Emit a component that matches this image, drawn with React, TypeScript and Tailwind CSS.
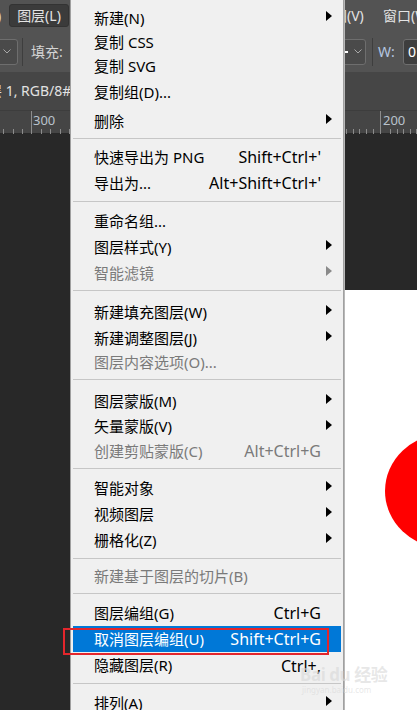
import React from "react";

type Row =
  | { sep: true; pt: number; pb: number }
  | {
      sep?: false;
      label: string;
      shortcut?: string;
      arrow?: boolean;
      disabled?: boolean;
      active?: boolean;
      h: number;
    };

const rows: Row[] = [
  { label: "新建(N)", arrow: true, h: 26 },
  { label: "复制 CSS", h: 23 },
  { label: "复制 SVG", h: 25 },
  { label: "复制组(D)...", h: 27 },
  { label: "删除", arrow: true, h: 30 },
  { sep: true, pt: 2, pb: 5 },
  { label: "快速导出为 PNG", shortcut: "Shift+Ctrl+'", h: 26 },
  { label: "导出为...", shortcut: "Alt+Shift+Ctrl+'", h: 26 },
  { sep: true, pt: 5, pb: 6 },
  { label: "重命名组...", h: 26 },
  { label: "图层样式(Y)", arrow: true, h: 26 },
  { label: "智能滤镜", arrow: true, disabled: true, h: 26 },
  { sep: true, pt: 4, pb: 8 },
  { label: "新建填充图层(W)", arrow: true, h: 26 },
  { label: "新建调整图层(J)", arrow: true, h: 26 },
  { label: "图层内容选项(O)...", disabled: true, h: 23 },
  { sep: true, pt: 5, pb: 8 },
  { label: "图层蒙版(M)", arrow: true, h: 26 },
  { label: "矢量蒙版(V)", arrow: true, h: 25 },
  { label: "创建剪贴蒙版(C)", shortcut: "Alt+Ctrl+G", disabled: true, h: 24 },
  { sep: true, pt: 5, pb: 6 },
  { label: "智能对象", arrow: true, h: 26 },
  { label: "视频图层", arrow: true, h: 26 },
  { label: "栅格化(Z)", arrow: true, h: 26 },
  { sep: true, pt: 5, pb: 5 },
  { label: "新建基于图层的切片(B)", disabled: true, h: 24 },
  { sep: true, pt: 5, pb: 6 },
  { label: "图层编组(G)", shortcut: "Ctrl+G", h: 26 },
  { label: "取消图层编组(U)", shortcut: "Shift+Ctrl+G", active: true, h: 26 },
  { label: "隐藏图层(R)", shortcut: "Ctrl+,", h: 27 },
  { sep: true, pt: 4, pb: 6 },
  { label: "排列(A)", arrow: true, h: 26 },
];

function Arrow({ color }: { color: string }) {
  return (
    <svg width="6" height="10" viewBox="0 0 6 10" className="mr-[9px] -translate-y-[2px] shrink-0">
      <path d="M0 0 L6 5 L0 10 Z" fill={color} />
    </svg>
  );
}

function Chevron() {
  return (
    <svg width="8" height="5" viewBox="0 0 8 5" className="shrink-0">
      <path d="M0.5 0.5 L4 4 L7.5 0.5" fill="none" stroke="#a8a8a8" strokeWidth="1" />
    </svg>
  );
}

function Menu() {
  return (
    <div className="absolute left-[70px] top-0 w-[274px] pt-[5px] bg-[#f0f0f0] border-x border-[#a0a0a0] shadow-[1px_0_0_#b8b8b8] text-[15px]">
      {rows.map((r, i) => {
        if (r.sep) {
          return (
            <div key={i} style={{ paddingTop: r.pt, paddingBottom: r.pb }}>
              <div className="mx-[2px] h-px bg-[#c6c6c6]" />
            </div>
          );
        }
        const color = r.active ? "text-white" : r.disabled ? "text-[#7a7a7a]" : "text-black";
        return (
          <div
            key={i}
            style={{ height: r.h }}
            className={`mx-[2px] flex items-center pl-[21px] ${r.active ? "bg-[#0078d7]" : ""} ${color}`}
          >
            <span className="flex-1 whitespace-nowrap">{r.label}</span>
            {r.shortcut && <span className="mr-[20px] whitespace-nowrap text-[16px]">{r.shortcut}</span>}
            {r.arrow && <Arrow color={r.disabled ? "#8a8a8a" : "#000"} />}
          </div>
        );
      })}
    </div>
  );
}

function Ruler() {
  const left = [3, 13, 22, 41, 50, 60, 69];
  const right = [346, 353, 359, 366, 373, 390, 397, 403, 410, 416];
  return (
    <div className="relative h-[23px] bg-[#454545] border-t border-[#3d3d3d] text-[13px] text-[#b9c2cc]">
      <svg className="absolute inset-0" width="417" height="23">
        <rect x="31" y="0" width="1" height="23" fill="#8c8c8c" />
        <rect x="380" y="0" width="1" height="23" fill="#8c8c8c" />
        {[...left, ...right].map((x) => (
          <rect key={x} x={x} y="18" width="1" height="5" fill="#8c8c8c" />
        ))}
      </svg>
      <span className="absolute left-[33px] top-[3px]">300</span>
      <span className="absolute left-[383px] top-[3px]">200</span>
    </div>
  );
}

export default function App() {
  return (
    <div className="relative w-[417px] h-[710px] overflow-hidden bg-[#282828] flex flex-col font-['Noto_Sans','Noto_Sans_CJK_SC',sans-serif] text-[14.5px] leading-none">
      {/* menu bar */}
      <div className="h-[31px] shrink-0 bg-[#535353] flex items-center text-[14px] text-[#e4e4e4]">
        <div className="w-[9px] shrink-0 overflow-hidden flex">
          <span className="-ml-[3px]">)</span>
        </div>
        <div className="w-[60px] h-[23px] shrink-0 rounded-[3px] bg-[#3b3b3b] border border-[#333] flex items-center justify-center">
          图层(L)
        </div>
        <div className="w-[250px] shrink-0" />
        <span className="w-[64px] shrink-0 whitespace-nowrap">视图(V)</span>
        <span className="whitespace-nowrap">窗口(W)</span>
      </div>

      {/* options bar */}
      <div className="h-[41px] shrink-0 bg-[#535353] flex items-center overflow-hidden text-[14px] text-[#d4d4d4]">
        <div className="-ml-[22px] w-[40px] h-[26px] shrink-0 rounded-[3px] border border-[#6e6e6e] bg-[#4a4a4a] flex items-center justify-end pr-[6px]">
          <Chevron />
        </div>
        <div className="ml-[4px] w-px h-[28px] shrink-0 bg-[#3e3e3e]" />
        <span className="ml-[8px] w-[40px] shrink-0 whitespace-nowrap">填充:</span>
        <div className="w-[229px] shrink-0" />
        <div className="w-[66px] h-[26px] shrink-0 rounded-[3px] border border-[#6e6e6e] bg-[#4a4a4a] flex items-center justify-end pr-[3px]">
          <div className="w-[6px] h-[2px] bg-white mr-[6px]" />
          <Chevron />
        </div>
        <div className="ml-[6px] w-px h-[28px] shrink-0 bg-[#3e3e3e]" />
        <span className="ml-[5px] w-[25px] shrink-0 text-[#b4c6e0]">W:</span>
        <div className="w-[40px] h-[26px] shrink-0 rounded-[3px] border border-[#6e6e6e] bg-[#3e3e3e] flex items-center pl-[4px] text-white">
          0
        </div>
      </div>

      {/* document tab */}
      <div className="h-[38px] shrink-0 bg-[#464646] flex items-center text-[14px] text-[#e2e2e2]">
        <span className="-ml-[26px] whitespace-nowrap">图层 1, RGB/8#) ×</span>
      </div>

      <Ruler />

      {/* canvas */}
      <div className="relative flex-1">
        <div className="absolute left-[200px] top-[157px] right-0 bottom-0 bg-white overflow-hidden">
          <svg className="absolute left-[185px] top-[141px]" width="120" height="120" viewBox="0 0 120 120">
            <ellipse cx="60" cy="60" rx="60" ry="57" fill="#ff0000" />
          </svg>
        </div>
      </div>

      <Menu />

      {/* annotation */}
      <div className="absolute left-[63px] top-[628px] w-[266px] h-[27px] border-2 border-[#e3262c]" />

      {/* watermark */}
      <div className="absolute left-[300px] top-[666px] text-[#d8d8d8]/60 pointer-events-none">
        <div className="text-[17px] font-bold tracking-tight leading-none">Bai du 经验</div>
        <div className="text-[8px] mt-[3px] ml-[2px] leading-none">jingyan.baidu.com</div>
      </div>
    </div>
  );
}
